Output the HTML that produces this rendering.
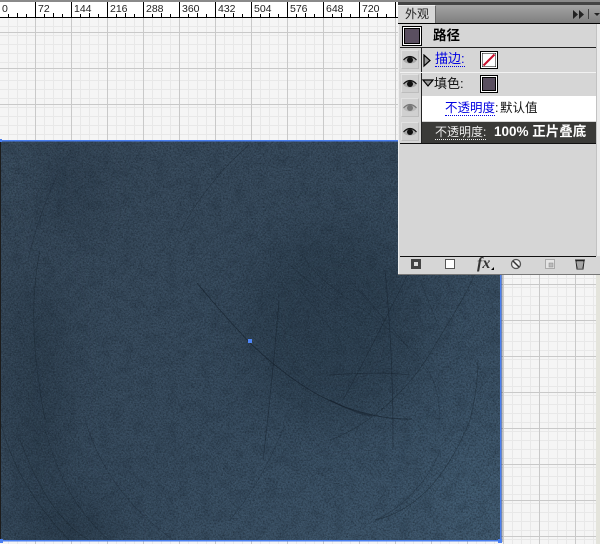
<!DOCTYPE html>
<html><head><meta charset="utf-8">
<style>
html,body{margin:0;padding:0;background:#f5f5f5}
#root{position:relative;width:600px;height:544px;overflow:hidden;background:#f5f5f5;font-family:"Liberation Sans","Noto Sans CJK SC",sans-serif;font-size:12px}
.a{position:absolute}
.t{position:absolute;white-space:nowrap;line-height:14px}
.r{position:absolute;white-space:nowrap;line-height:14px;top:2px;font-size:10.5px;color:#222}
.eye{position:absolute;left:401px;width:18px;height:19px;background:#d0d0d0;border-top:1px solid #e2e2e2;border-left:1px solid #e2e2e2;border-right:1px solid #bdbdbd;border-bottom:1px solid #bdbdbd;box-sizing:border-box}
.eye svg{position:absolute;left:1px;top:3px}
.ul{border-bottom:1px dotted currentColor;line-height:13px}
.sw{position:absolute;box-sizing:border-box;border:1px solid #000;background:#fff;padding:1px}
.sw i{display:block;width:100%;height:100%;background:#5a4f60;border:1px solid #000;box-sizing:border-box}
</style></head><body><div id="root">

<svg class="a" style="left:0;top:0" width="600" height="544" xmlns="http://www.w3.org/2000/svg">
<defs>
<pattern id="mn" width="9" height="9" patternUnits="userSpaceOnUse" x="-1" y="-1">
<path d="M0.5 0V9M0 0.5H9" stroke="#e8e8e8" stroke-width="1"/>
</pattern>
<pattern id="mj" width="36" height="36" patternUnits="userSpaceOnUse" x="35" y="32">
<path d="M0.5 0V36M0 0.5H36" stroke="#c9c9c9" stroke-width="1"/>
</pattern>
<filter id="nz" x="0" y="0" width="100%" height="100%" color-interpolation-filters="sRGB">
<feTurbulence type="fractalNoise" baseFrequency="0.6" numOctaves="3" seed="7"/>
<feColorMatrix type="matrix" values="0 0 0 0 0.08  0 0 0 0 0.12  0 0 0 0 0.16  1.6 0 0 0 -0.62"/>
</filter>
<filter id="nm" x="0" y="0" width="100%" height="100%" color-interpolation-filters="sRGB">
<feTurbulence type="fractalNoise" baseFrequency="0.09" numOctaves="3" seed="4"/>
<feColorMatrix type="matrix" values="0 0 0 0 0.1  0 0 0 0 0.15  0 0 0 0 0.2  1.4 0 0 0 -0.6"/>
</filter>
<filter id="nl" x="0" y="0" width="100%" height="100%" color-interpolation-filters="sRGB">
<feTurbulence type="fractalNoise" baseFrequency="0.85" numOctaves="2" seed="21"/>
<feColorMatrix type="matrix" values="0 0 0 0 0.42  0 0 0 0 0.55  0 0 0 0 0.63  0 1.8 0 0 -0.85"/>
</filter>
<filter id="bl" color-interpolation-filters="sRGB"><feGaussianBlur stdDeviation="22"/></filter>
<linearGradient id="bg" x1="0" y1="0" x2="1" y2="1">
<stop offset="0" stop-color="#38495a"/><stop offset=".55" stop-color="#374b5e"/><stop offset="1" stop-color="#40596f"/>
</linearGradient>
<clipPath id="cv"><rect x="0" y="141" width="500" height="400"/></clipPath>
</defs>
<rect width="600" height="544" fill="#f5f5f5"/>
<rect width="600" height="544" fill="url(#mn)"/>
<rect width="600" height="544" fill="url(#mj)"/>
<rect x="596" y="274" width="4" height="270" fill="#e4e4dc"/>
<g clip-path="url(#cv)">
<rect x="0" y="141" width="500" height="400" fill="url(#bg)"/>
<g filter="url(#bl)" fill="#1e2c39">
<ellipse cx="335" cy="325" rx="90" ry="100" opacity=".38"/>
<ellipse cx="38" cy="390" rx="20" ry="120" opacity=".55"/>
<ellipse cx="70" cy="190" rx="25" ry="45" opacity=".35"/>
<ellipse cx="70" cy="530" rx="50" ry="26" opacity=".55"/>
</g>
<g filter="url(#bl)" fill="#4d6b82">
<ellipse cx="475" cy="490" rx="36" ry="55" opacity=".3"/>
<ellipse cx="8" cy="170" rx="12" ry="26" opacity=".4"/>
</g>
<rect x="0" y="141" width="500" height="400" filter="url(#nm)" opacity=".35"/>
<rect x="0" y="141" width="500" height="400" filter="url(#nz)" opacity=".75"/>
<rect x="0" y="141" width="500" height="400" filter="url(#nl)" opacity=".3"/>
<g fill="none" stroke="#141e29">
<path d="M197 283C215 305 233 325 250 343C275 367 305 390 333 402C355 412 385 420 412 419" stroke-width=".9" opacity=".65"/>
<path d="M330 400C345 408 360 414 372 416" stroke-width="1.3" opacity=".5"/>
<path d="M279 300C275 350 268 420 263 460" stroke-width=".8" opacity=".5"/>
<path d="M181 230C200 195 225 165 248 146" stroke-width=".6" opacity=".4"/>
<path d="M330 440C370 425 410 390 435 345C450 320 470 290 478 265" stroke-width=".7" opacity=".45"/>
<path d="M343 400C365 360 385 320 410 270" stroke-width=".7" opacity=".5"/>
<path d="M393 450C393 400 392 340 385 270" stroke-width=".8" opacity=".5"/>
<path d="M330 375C360 373 390 372 410 375" stroke-width=".8" opacity=".5"/>
<path d="M375 520C420 510 450 470 470 420C475 400 478 380 478 360" stroke-width=".8" opacity=".45"/>
<path d="M440 450C430 480 400 510 375 520" stroke-width=".6" opacity=".35"/>
<path d="M300 250C320 290 360 300 400 340C430 360 440 390 440 420" stroke-width=".6" opacity=".3"/>
<path d="M350 280L375 310M360 290L410 350M420 280L440 330M300 290L340 340M290 265L330 300" stroke-width=".6" opacity=".3"/>
<path d="M0 420C10 460 30 500 70 541" stroke-width=".7" opacity=".45"/>
<path d="M20 440C35 480 55 520 90 541" stroke-width=".7" opacity=".45"/>
<path d="M45 430C60 480 75 510 110 541" stroke-width=".6" opacity=".4"/>
<path d="M85 420C100 470 130 510 175 541" stroke-width=".6" opacity=".35"/>
<path d="M40 250C30 300 32 350 45 420" stroke-width=".7" opacity=".45"/>
<path d="M60 170C45 200 35 230 28 260" stroke-width=".7" opacity=".35"/>
<path d="M230 520C255 490 270 460 285 425" stroke-width=".6" opacity=".35"/>
</g>
</g>
<rect x="0" y="141" width="1" height="400" fill="#1c1c1c"/>
<rect x="0" y="140" width="500" height="1.5" fill="#4a7ff0"/>
<rect x="0" y="540" width="501" height="1.5" fill="#4a7ff0"/>
<rect x="500" y="140" width="1.5" height="401" fill="#4a7ff0"/>
<rect x="501.5" y="140" width="1" height="402" fill="#222" opacity=".5"/>
<rect x="0" y="139" width="2" height="3" fill="#4a7ff0"/>
<rect x="0" y="539" width="3" height="4" fill="#4a7ff0"/>
<rect x="498" y="539" width="4" height="4" fill="#4a7ff0"/>
<rect x="248" y="339" width="4" height="4" fill="#4f86f7"/>
</svg>

<!-- ruler -->
<div class="a" style="left:0;top:0;width:600px;height:2px;background:#8a8a8a"></div>
<div class="a" style="left:0;top:2px;width:600px;height:15px;background:#fff"></div>
<div class="a" style="left:0;top:17px;width:600px;height:1px;background:#000"></div>
<svg class="a" style="left:0;top:0" width="400" height="18">
<path d="M35.5 2V17M71.5 2V17M107.5 2V17M143.5 2V17M179.5 2V17M215.5 2V17M251.5 2V17M287.5 2V17M323.5 2V17M359.5 2V17M395.5 2V17" stroke="#000"/>
<path d="M8.5 14V17M17.5 13V17M26.5 14V17M44.5 14V17M53.5 13V17M62.5 14V17M80.5 14V17M89.5 13V17M98.5 14V17M116.5 14V17M125.5 13V17M134.5 14V17M152.5 14V17M161.5 13V17M170.5 14V17M188.5 14V17M197.5 13V17M206.5 14V17M224.5 14V17M233.5 13V17M242.5 14V17M260.5 14V17M269.5 13V17M278.5 14V17M296.5 14V17M305.5 13V17M314.5 14V17M332.5 14V17M341.5 13V17M350.5 14V17M368.5 14V17M377.5 13V17M386.5 14V17" stroke="#000"/>
</svg>
<div class="r" style="left:2px">0</div>
<div class="r" style="left:38px">72</div>
<div class="r" style="left:74px">144</div>
<div class="r" style="left:110px">216</div>
<div class="r" style="left:146px">288</div>
<div class="r" style="left:182px">360</div>
<div class="r" style="left:218px">432</div>
<div class="r" style="left:254px">504</div>
<div class="r" style="left:290px">576</div>
<div class="r" style="left:326px">648</div>
<div class="r" style="left:362px">720</div>

<!-- panel -->
<div class="a" style="left:398px;top:2px;width:202px;height:272px;background:#d6d6d6;box-shadow:inset 1px 0 0 #eee,0 1px 0 #777"></div>
<div class="a" style="left:398px;top:2px;width:202px;height:3px;background:#444"></div>
<div class="a" style="left:398px;top:5px;width:202px;height:18px;background:linear-gradient(#a4a4a4,#7e7e7e)"></div>
<div class="a" style="left:398px;top:5px;width:38px;height:18px;background:#d6d6d6;box-sizing:border-box;border-top:1px solid #eee;border-right:1px solid #666"></div>
<div class="t" style="left:405px;top:7px;font-size:12px;color:#222">外观</div>
<svg class="a" style="left:570px;top:8px" width="30" height="12">
<path d="M3 2V11L8 6.5ZM9 2V11L14 6.5Z" fill="#222"/><path d="M18.5 1V11" stroke="#444"/><path d="M24 5H30L27 8Z" fill="#222"/>
</svg>
<div class="a" style="left:398px;top:23px;width:202px;height:1px;background:#000"></div>
<div class="a" style="left:596px;top:24px;width:4px;height:232px;background:#ececec;border-left:1px solid #c2c2c2;box-sizing:border-box"></div>

<div class="sw" style="left:402px;top:26px;width:20px;height:20px"><i></i></div>
<div class="t" style="left:433px;top:29px;font-size:13.5px;font-weight:bold;color:#000">路径</div>

<div class="a" style="left:400px;top:47px;width:196px;height:1px;background:#222"></div>
<div class="a" style="left:421px;top:47px;width:1px;height:97px;background:#222"></div>
<div class="a" style="left:400px;top:72px;width:196px;height:1px;background:#f2f2f2"></div>

<div class="eye" style="top:50px"><svg width="14" height="12"><ellipse cx="7" cy="6" rx="6.500" ry="3.500" fill="#aaa"/><path d="M.5 6Q7-1 13.5 6" stroke="#111" fill="none" stroke-width="1.2"/><circle cx="7" cy="6" r="3" fill="#111"/></svg></div>
<div class="eye" style="top:74px"><svg width="14" height="12"><ellipse cx="7" cy="6" rx="6.500" ry="3.500" fill="#aaa"/><path d="M.5 6Q7-1 13.5 6" stroke="#111" fill="none" stroke-width="1.2"/><circle cx="7" cy="6" r="3" fill="#111"/></svg></div>
<div class="eye" style="top:98px"><svg width="14" height="12"><ellipse cx="7" cy="6" rx="6.500" ry="3.500" fill="#bbb"/><path d="M.5 6Q7-1 13.5 6" stroke="#777" fill="none" stroke-width="1.2"/><circle cx="7" cy="6" r="3" fill="#777"/></svg></div>
<div class="eye" style="top:122px"><svg width="14" height="12"><ellipse cx="7" cy="6" rx="6.500" ry="3.500" fill="#aaa"/><path d="M.5 6Q7-1 13.5 6" stroke="#111" fill="none" stroke-width="1.2"/><circle cx="7" cy="6" r="3" fill="#111"/></svg></div>

<svg class="a" style="left:423px;top:54px" width="9" height="14"><path d="M1 1V12L7 6.5Z" fill="#999" stroke="#000" stroke-width="1.2"/></svg>
<div class="t" style="left:435px;top:52px;font-size:13px;color:#0000e0"><span class="ul">描边:</span></div>
<div class="sw" style="left:480px;top:51px;width:18px;height:18px;padding:1px"><svg width="14" height="14" style="display:block"><rect width="14" height="14" fill="#fff" stroke="#000" stroke-width="1"/><path d="M1.5 12.5L12.5 1.5" stroke="#c8102e" stroke-width="2"/></svg></div>

<svg class="a" style="left:422px;top:79px" width="12" height="9"><path d="M1 1H11L6 7Z" fill="#999" stroke="#000" stroke-width="1.2"/></svg>
<div class="t" style="left:434px;top:77px;font-size:13px;color:#111">填色:</div>
<div class="sw" style="left:480px;top:75px;width:18px;height:18px"><i></i></div>

<div class="a" style="left:422px;top:96px;width:174px;height:25px;background:#fff"></div>
<div class="t" style="left:445px;top:101px;color:#0000e0;font-size:12.500px"><span class="ul">不透明度</span></div>
<div class="t" style="left:495px;top:101px;color:#111;font-size:12.500px">:</div>
<div class="t" style="left:500px;top:101px;color:#111;font-size:12.500px">默认值</div>

<div class="a" style="left:422px;top:122px;width:174px;height:21px;background:#3a3a38"></div>
<div class="t" style="left:435px;top:125px;color:#eee;font-size:12px"><span class="ul">不透明度:</span></div>
<div class="t" style="left:494px;top:125px;color:#fff;font-weight:bold;font-size:13.500px">100% 正片叠底</div>

<div class="a" style="left:400px;top:143px;width:196px;height:1px;background:#111"></div>
<div class="a" style="left:400px;top:256px;width:196px;height:1px;background:#111"></div>

<svg class="a" style="left:398px;top:256px" width="202" height="18">
<rect x="13" y="3" width="10" height="10" fill="#444"/><rect x="16" y="6" width="4" height="4" fill="#ddd"/>
<rect x="47.5" y="3.500" width="9" height="9" fill="#fff" stroke="#555"/>
<path d="M93 14L96 11V14Z" fill="#000"/>
<circle cx="118" cy="8" r="4.500" fill="#eee" stroke="#555" stroke-width="1.300"/><path d="M115 5L121 11" stroke="#333" stroke-width="1.500"/>
<rect x="147.500" y="3.500" width="9" height="9" fill="#e4e4e4" stroke="#aaa"/><rect x="151" y="7" width="4" height="4" fill="#bbb" stroke="#888" stroke-width=".5"/>
<path d="M177 4H187M178 5H186L185 13H179Z" fill="#eee" stroke="#222"/><path d="M180 6V12M182 6V12M184 6V12" stroke="#222" stroke-width=".7"/>
</svg>
<div class="t" style="left:477px;top:256px;font-family:'Liberation Serif',serif;font-style:italic;font-weight:bold;font-size:16px;color:#333;line-height:16px">fx</div>
</div></body></html>
